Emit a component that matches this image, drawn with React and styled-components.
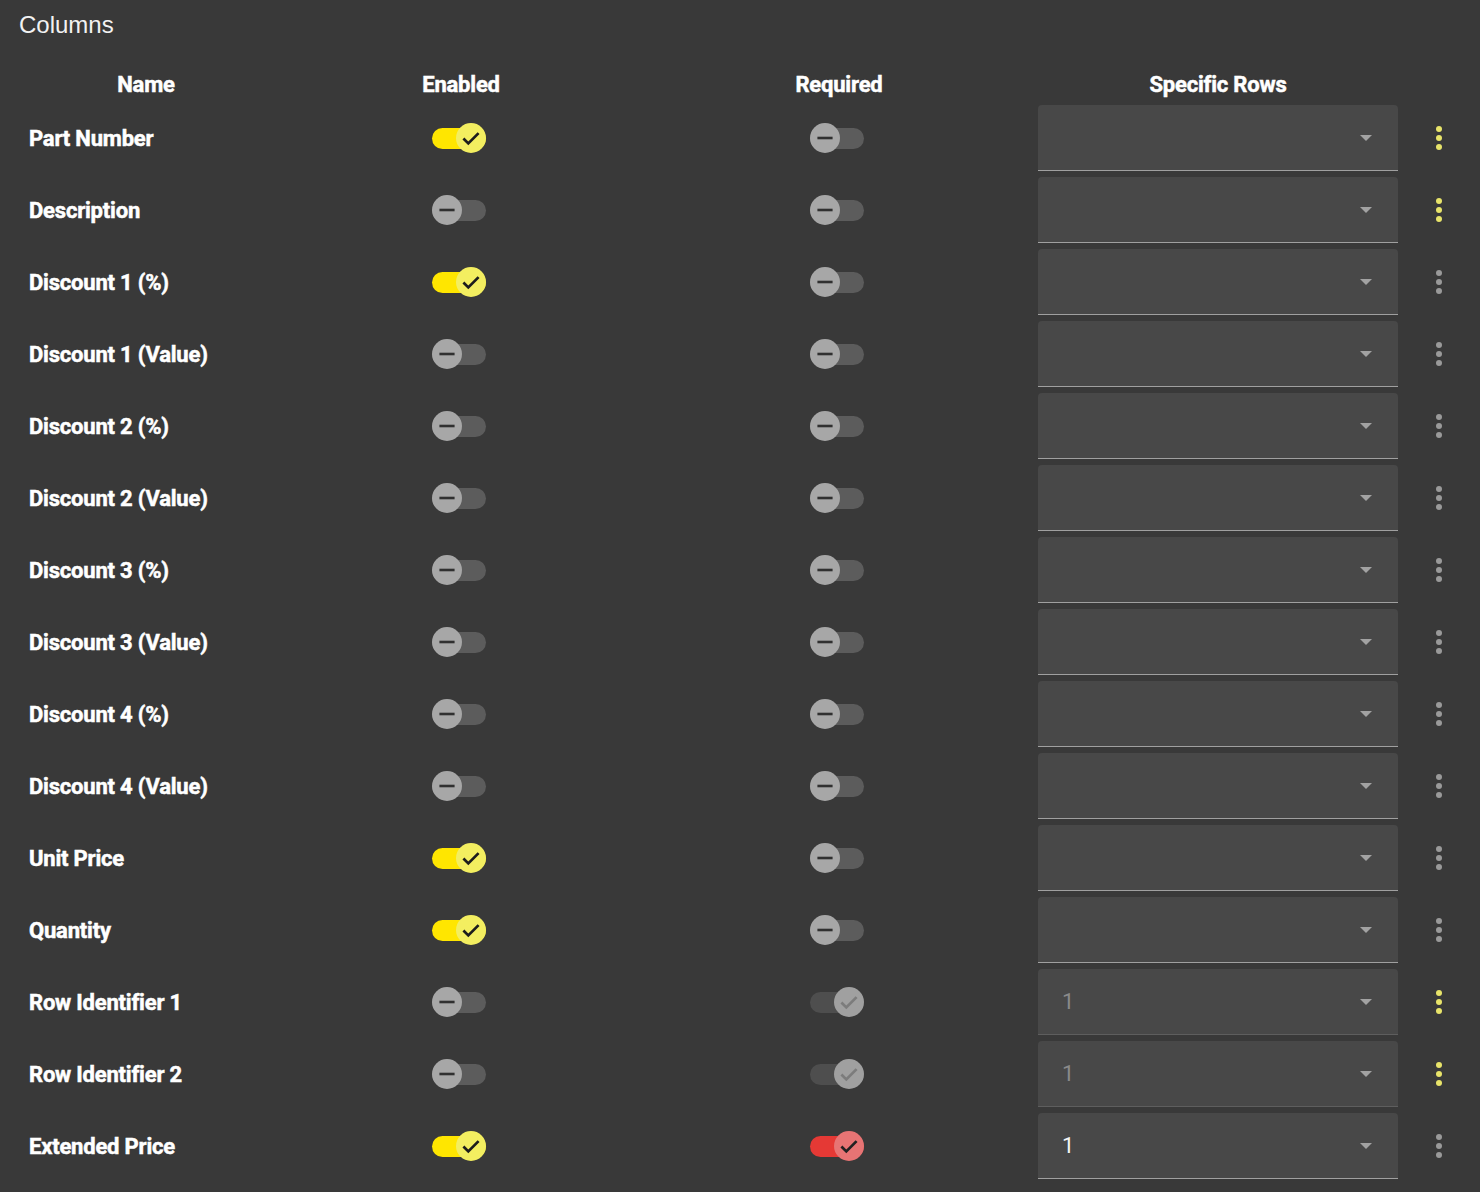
import styled, { createGlobalStyle } from "styled-components";

const GlobalStyle = createGlobalStyle`
  body {
    margin: 0;
    background: #393939;
    font-family: Roboto, "Liberation Sans", sans-serif;
  }
`;

const rows = [
  { name: "Part Number", enabled: true, required: "off", value: "", dots: "accent" },
  { name: "Description", enabled: false, required: "off", value: "", dots: "accent" },
  { name: "Discount 1 (%)", enabled: true, required: "off", value: "" },
  { name: "Discount 1 (Value)", enabled: false, required: "off", value: "" },
  { name: "Discount 2 (%)", enabled: false, required: "off", value: "" },
  { name: "Discount 2 (Value)", enabled: false, required: "off", value: "" },
  { name: "Discount 3 (%)", enabled: false, required: "off", value: "" },
  { name: "Discount 3 (Value)", enabled: false, required: "off", value: "" },
  { name: "Discount 4 (%)", enabled: false, required: "off", value: "" },
  { name: "Discount 4 (Value)", enabled: false, required: "off", value: "" },
  { name: "Unit Price", enabled: true, required: "off", value: "" },
  { name: "Quantity", enabled: true, required: "off", value: "" },
  { name: "Row Identifier 1", enabled: false, required: "locked", value: "1", disabled: true, dots: "accent" },
  { name: "Row Identifier 2", enabled: false, required: "locked", value: "1", disabled: true, dots: "accent" },
  { name: "Extended Price", enabled: true, required: "red", value: "1" },
];

// colours for each switch state
const switchColors = {
  off: { track: "#5c5c5c", thumb: "#a7a7a7", mark: "#303030" },
  yellow: { track: "#ffe600", thumb: "#f3ee60", mark: "#1c1c1c" },
  red: { track: "#e53935", thumb: "#e77474", mark: "#222" },
  locked: { track: "#4e4e4e", thumb: "#a0a0a0", mark: "#7c7c7c" },
};

function Toggle({ state }) {
  const on = state !== "off";
  const c = switchColors[state];
  return (
    <Track $color={c.track}>
      <Thumb $on={on} $color={c.thumb}>
        <svg width="26" height="26" viewBox="0 0 24 24">
          {on ? (
            <path d="M5 12.5l4.5 4.5L19 7.5" fill="none" stroke={c.mark} strokeWidth="2.5" />
          ) : (
            <path d="M5 12h14" stroke={c.mark} strokeWidth="2.4" />
          )}
        </svg>
      </Thumb>
    </Track>
  );
}

export default function App() {
  return (
    <Page>
      <GlobalStyle />
      <Title>Columns</Title>
      <Table>
        <HeaderCell>Name</HeaderCell>
        <HeaderCell>Enabled</HeaderCell>
        <HeaderCell>Required</HeaderCell>
        <HeaderCell>Specific Rows</HeaderCell>
        <HeaderCell />
        {rows.map((row) => (
          <Row key={row.name}>
            <NameCell>{row.name}</NameCell>
            <SwitchCell>
              <Toggle state={row.enabled ? "yellow" : "off"} />
            </SwitchCell>
            <SwitchCell>
              <Toggle state={row.required} />
            </SwitchCell>
            <SelectCell>
              <Select $disabled={row.disabled}>
                <SelectValue $disabled={row.disabled}>{row.value}</SelectValue>
                <Arrow />
              </Select>
            </SelectCell>
            <MenuCell>
              <Dots $accent={row.dots === "accent"}>
                <span />
                <span />
                <span />
              </Dots>
            </MenuCell>
          </Row>
        ))}
      </Table>
    </Page>
  );
}

const Page = styled.div`
  min-height: 1192px;
  background: #393939;
  color: #fff;
`;

const Title = styled.div`
  font-family: "Liberation Sans", Arial, sans-serif;
  font-size: 24px;
  line-height: 28px;
  padding: 11px 19px 0;
  color: #f2f2f2;
`;

const Table = styled.div`
  display: grid;
  grid-template-columns: 266px 364px 392px 366px 1fr;
  grid-template-rows: 36px;
  grid-auto-rows: 72px;
  padding: 27px 0 0 13px;
`;

const HeaderCell = styled.div`
  display: flex;
  align-items: center;
  justify-content: center;
  font-weight: 700;
  font-size: 22px;
  letter-spacing: -0.2px;
  -webkit-text-stroke: 0.5px #fff;
  color: #fff;
`;

const Row = styled.div`
  display: contents;
`;

const NameCell = styled.div`
  display: flex;
  align-items: center;
  padding-left: 16px;
  font-weight: 700;
  font-size: 22px;
  letter-spacing: -0.2px;
  -webkit-text-stroke: 0.5px #fff;
  color: #fff;
`;

const SwitchCell = styled.div`
  display: flex;
  align-items: center;
  justify-content: center;
  padding-right: 4px;
`;

const MenuCell = styled.div`
  display: flex;
  align-items: center;
  justify-content: center;
`;

const Track = styled.div`
  position: relative;
  width: 54px;
  height: 21px;
  border-radius: 11px;
  background: ${(p) => p.$color};
  display: flex;
  align-items: center;
`;

const Thumb = styled.div`
  position: absolute;
  ${(p) => (p.$on ? "right: 0;" : "left: 0;")}
  width: 30px;
  height: 30px;
  border-radius: 50%;
  background: ${(p) => p.$color};
  display: flex;
  align-items: center;
  justify-content: center;
`;

const SelectCell = styled.div`
  padding: 3px;
`;

const Select = styled.div`
  height: 100%;
  box-sizing: border-box;
  background: #484848;
  border-radius: 4px 4px 0 0;
  border-bottom: 1px solid ${(p) => (p.$disabled ? "#5e5e5e" : "#a0a0a0")};
  display: flex;
  align-items: center;
  justify-content: space-between;
  padding: 0 26px 0 24px;
`;

const SelectValue = styled.span`
  font-family: Roboto, sans-serif;
  font-size: 22px;
  color: ${(p) => (p.$disabled ? "#8a8a8a" : "#f4f4f4")};
`;

const Arrow = styled.span`
  width: 0;
  height: 0;
  border-left: 6px solid transparent;
  border-right: 6px solid transparent;
  border-top: 6px solid #a2a2a2;
`;

const Dots = styled.div`
  display: flex;
  flex-direction: column;
  gap: 3px;
  margin-right: 4px;

  span {
    width: 6px;
    height: 6px;
    border-radius: 50%;
    background: ${(p) => (p.$accent ? "#e8e46a" : "#9a9a9a")};
  }
`;
